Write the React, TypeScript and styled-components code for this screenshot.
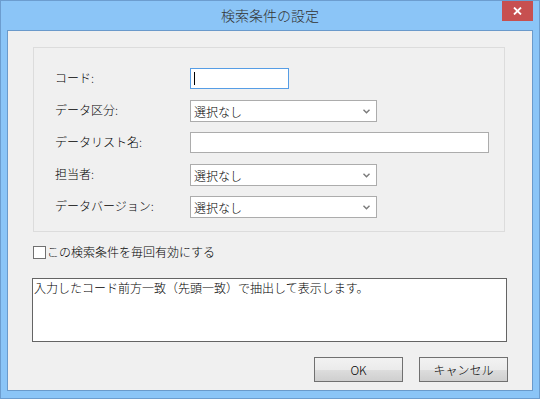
import * as React from "react";
import styled, { createGlobalStyle } from "styled-components";

const GlobalStyle = createGlobalStyle`
  html, body {
    margin: 0;
    padding: 0;
    background: #ffffff;
  }

  body {
    font-family: "Noto Sans CJK JP", "Noto Sans", sans-serif;
    font-size: 12px;
    font-weight: 300;
    color: #000000;
  }
`;

const fields = [
  { label: "コード:", kind: "code" },
  { label: "データ区分:", kind: "select" },
  { label: "データリスト名:", kind: "wide" },
  { label: "担当者:", kind: "select" },
  { label: "データバージョン:", kind: "select" },
];

const Chevron = () => (
  <svg width="7" height="5" viewBox="0 0 7 5">
    <path d="M0.5 0.8 L3.5 3.8 L6.5 0.8" fill="none" stroke="#7a7a7a" strokeWidth="1.4" />
  </svg>
);

const App = () => {
  return (
    <>
      <GlobalStyle />
      <Window>
        <TitleBar>
          <span />
          <Title>検索条件の設定</Title>
          <CloseButton>
            <svg width="9" height="8" viewBox="0 0 9 8">
              <path d="M1 0.5 L8 7.5 M8 0.5 L1 7.5" stroke="#ffffff" strokeWidth="1.8" />
            </svg>
          </CloseButton>
        </TitleBar>

        <Client>
          <GroupBox>
            {fields.map((field) => (
              <React.Fragment key={field.label}>
                <FieldLabel>{field.label}</FieldLabel>
                {field.kind === "select" ? (
                  <SelectBox>
                    <span>選択なし</span>
                    <Chevron />
                  </SelectBox>
                ) : (
                  <TextBox $wide={field.kind === "wide"} $focused={field.kind === "code"}>
                    {field.kind === "code" && <Caret />}
                  </TextBox>
                )}
              </React.Fragment>
            ))}
          </GroupBox>

          <CheckRow>
            <CheckBox />
            <span>この検索条件を毎回有効にする</span>
          </CheckRow>

          <Description>入力したコード前方一致（先頭一致）で抽出して表示します。</Description>

          <ButtonRow>
            <DialogButton>OK</DialogButton>
            <DialogButton>キャンセル</DialogButton>
          </ButtonRow>
        </Client>
      </Window>
    </>
  );
};

const Window = styled.div`
  width: 540px;
  height: 399px;
  box-sizing: border-box;
  border: 1px solid #6c9dcf;
  background-color: #8bc5f7;
  display: flex;
  flex-direction: column;
`;

const TitleBar = styled.div`
  height: 29px;
  display: grid;
  grid-template-columns: 1fr auto 1fr;
  align-items: start;
  padding-right: 6px;
`;

const Title = styled.div`
  font-size: 14px;
  line-height: 29px;
  color: #333333;
  padding-left: 6px;
`;

const CloseButton = styled.div`
  justify-self: end;
  width: 31px;
  height: 20px;
  background-color: #c75050;
  display: flex;
  align-items: center;
  justify-content: center;
`;

const Client = styled.div`
  flex: 1;
  margin: 0 6px 7px 6px;
  border: 1px solid #6a9acb;
  background-color: #f0f0f0;
  display: flex;
  flex-direction: column;
  padding: 16px 24px 8px 25px;
`;

const GroupBox = styled.div`
  width: 472px;
  height: 185px;
  box-sizing: border-box;
  border: 1px solid #dcdcdc;
  padding: 20px 0 0 21px;
  display: grid;
  grid-template-columns: 135px auto;
  grid-auto-rows: 22px;
  row-gap: 10px;
  align-items: start;
`;

const FieldLabel = styled.div`
  line-height: 20px;
  white-space: nowrap;
`;

const TextBox = styled.div<{ $wide?: boolean; $focused?: boolean }>`
  width: ${(p) => (p.$wide ? "299px" : "99px")};
  height: 21px;
  box-sizing: border-box;
  background-color: #ffffff;
  border: 1px solid ${(p) => (p.$focused ? "#569de5" : "#acacac")};
  display: flex;
  align-items: center;
  padding-left: 3px;
`;

const Caret = styled.span`
  width: 1px;
  height: 13px;
  background-color: #000000;
`;

const SelectBox = styled.div`
  width: 187px;
  height: 22px;
  box-sizing: border-box;
  background-color: #ffffff;
  border: 1px solid #acacac;
  display: flex;
  align-items: center;
  justify-content: space-between;
  padding: 0 6px 0 3px;
`;

const CheckRow = styled.div`
  margin-top: 13px;
  display: flex;
  align-items: center;
  gap: 1px;
  height: 14px;
  line-height: 14px;
`;

const CheckBox = styled.span`
  width: 13px;
  height: 13px;
  box-sizing: border-box;
  border: 1px solid #707070;
  background-color: #ffffff;
`;

const Description = styled.div`
  margin: 19px 0 0 -1px;
  width: 475px;
  height: 64px;
  box-sizing: border-box;
  border: 1px solid #646464;
  background-color: #ffffff;
  padding: 2px 1px;
  line-height: 14px;
`;

const ButtonRow = styled.div`
  margin-top: 15px;
  display: flex;
  justify-content: flex-end;
  gap: 16px;
`;

const DialogButton = styled.div`
  width: 89px;
  height: 25px;
  box-sizing: border-box;
  border: 1px solid #707070;
  background: linear-gradient(to bottom, #f2f2f2 0%, #ebebeb 50%, #dddddd 51%, #cfcfcf 100%);
  display: flex;
  align-items: center;
  justify-content: center;
`;

export default App;
